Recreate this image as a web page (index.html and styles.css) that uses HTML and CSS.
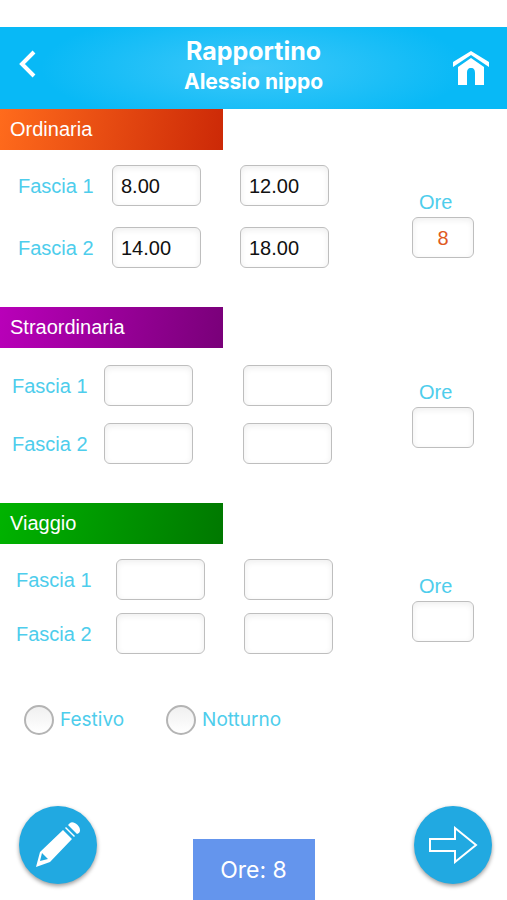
FILE: index.html
```html
<!DOCTYPE html>
<html lang="it">
<head>
<meta charset="utf-8">
<meta name="viewport" content="width=device-width, initial-scale=1">
<title>Rapportino</title>
<link rel="stylesheet" href="styles.css">
</head>
<body>
<header class="bar">
  <button class="bar-btn back" type="button" aria-label="Indietro">
    <svg width="18" height="30" viewBox="0 0 18 30"><path d="M16 3 4 15 16 27" fill="none" stroke="#fff" stroke-width="4"/></svg>
  </button>
  <div class="heading">
    <h1>Rapportino</h1>
    <p>Alessio nippo</p>
  </div>
  <a class="bar-btn home" href="#" aria-label="Home">
    <svg width="36" height="34" viewBox="0 0 36 34" fill="#fff"><path d="M18 0 36 11v5L18 4 0 16v-5z"/><path d="M18 7 31 16v18h-9V22c0-3-1-5-4-5s-4 2-4 5v12H5V16z"/></svg>
  </a>
</header>
<main>
  <section class="ordinary">
    <h2 class="tag">Ordinaria</h2>
    <div class="body">
      <div class="slots">
        <label for="o1">Fascia 1</label>
        <input id="o1" type="text" value="8.00"><input type="text" value="12.00" aria-label="Fascia 1 fine">
        <label for="o2">Fascia 2</label>
        <input id="o2" type="text" value="14.00"><input type="text" value="18.00" aria-label="Fascia 2 fine">
      </div>
      <div class="total">
        <label for="ot">Ore</label>
        <input id="ot" type="text" value="8" readonly>
      </div>
    </div>
  </section>
  <section class="overtime">
    <h2 class="tag">Straordinaria</h2>
    <div class="body">
      <div class="slots">
        <label for="s1">Fascia 1</label>
        <input id="s1" type="text"><input type="text" aria-label="Fascia 1 fine">
        <label for="s2">Fascia 2</label>
        <input id="s2" type="text"><input type="text" aria-label="Fascia 2 fine">
      </div>
      <div class="total">
        <label for="st">Ore</label>
        <input id="st" type="text" readonly>
      </div>
    </div>
  </section>
  <section class="travel">
    <h2 class="tag">Viaggio</h2>
    <div class="body">
      <div class="slots">
        <label for="v1">Fascia 1</label>
        <input id="v1" type="text"><input type="text" aria-label="Fascia 1 fine">
        <label for="v2">Fascia 2</label>
        <input id="v2" type="text"><input type="text" aria-label="Fascia 2 fine">
      </div>
      <div class="total">
        <label for="vt">Ore</label>
        <input id="vt" type="text" readonly>
      </div>
    </div>
  </section>
  <div class="options">
    <label><input type="radio" name="tipo">Festivo</label>
    <label><input type="radio" name="tipo">Notturno</label>
  </div>
</main>
<footer>
  <button class="round edit" type="button" aria-label="Modifica">
    <svg width="46" height="46" viewBox="0 0 46 46" fill="#fff"><path fill-rule="evenodd" d="M1 45 5 30 28 8 37 17 15 40zM5 39 13 37 7 31z"/><path d="m30 6 1-1 9 9-1 1z"/><path d="m33 3 2-2c4-3 13 5 9 10l-2 1z"/></svg>
  </button>
  <output class="sum">Ore: 8</output>
  <button class="round next" type="button" aria-label="Avanti">
    <svg width="50" height="38" viewBox="0 0 50 38"><path d="M2 13H27V2L48 19 27 36V25H2z" fill="none" stroke="#fff" stroke-width="2"/></svg>
  </button>
</footer>
</body>
</html>
```
FILE: styles.css
```css
* { box-sizing: border-box; }
body {
  margin: 0;
  min-height: 100vh;
  display: flex;
  flex-direction: column;
  background: #fff;
  font-family: "Liberation Sans", Arial, sans-serif;
  font-size: 20px;
  line-height: 24px;
}
h1, h2, p { margin: 0; }
button { border: 0; padding: 0; background: none; cursor: pointer; }
svg { display: block; }

.bar {
  margin-top: 27px;
  min-height: 82px;
  padding: 0 18px;
  display: grid;
  grid-template-columns: 1fr auto 1fr;
  align-items: center;
  color: #fff;
  background: radial-gradient(ellipse 42% 75% at 50% 50%, #3ec8f9, #08b9f6);
  font-family: Inter, sans-serif;
}
.bar-btn { justify-self: start; }
.back { margin-bottom: 8px; }
.home { justify-self: end; }
.heading { padding-bottom: 4px; text-align: center; font-weight: 700; }
.heading h1 { font-size: 25px; line-height: 32px; }
.heading p { font-size: 21px; line-height: 30px; }

.tag {
  width: 44%;
  padding: 8px 10px 9px;
  color: #fff;
  font-size: 20px;
  font-weight: 400;
}
.ordinary .tag { background: linear-gradient(100deg, #ff6b1c, #cc2907); }
.overtime .tag { background: linear-gradient(100deg, #b900b9, #790079); }
.travel .tag { background: linear-gradient(100deg, #00b300, #007800); }

.body {
  display: flex;
  justify-content: space-between;
  padding: 15px 33px 39px 0;
}
.overtime .body { padding-top: 17px; }

.slots {
  display: grid;
  align-items: center;
  align-content: start;
}
.slots label, .total label, .options { color: #4ecdec; }
.ordinary .slots {
  grid-template-columns: 94px 128px 89px;
  row-gap: 21px;
  padding-left: 18px;
}
.overtime .slots {
  grid-template-columns: 92px 139px 89px;
  row-gap: 17px;
  padding-left: 12px;
}
.travel .slots {
  grid-template-columns: 100px 128px 89px;
  row-gap: 13px;
  padding-left: 16px;
}

input[type="text"] {
  width: 89px;
  height: 41px;
  padding: 2px 8px 0;
  border: 1px solid #bebebe;
  border-radius: 6px;
  background: #fff;
  box-shadow: inset 0 2px 6px #eee;
  color: #111;
  font: inherit;
}
.total {
  display: flex;
  flex-direction: column;
  gap: 3px;
  padding-top: 15px;
}
.ordinary .total { padding-top: 25px; }
.total label { padding-left: 7px; }
.total input[type="text"] { width: 62px; text-align: center; color: #e05a1e; }

.options {
  display: flex;
  gap: 42px;
  padding: 12px 24px;
  font-family: Inter, sans-serif;
  font-size: 19px;
}
.options label { display: flex; align-items: center; gap: 6px; }
.options input {
  appearance: none;
  width: 30px;
  height: 30px;
  margin: 0;
  border: 2px solid #b4b4b4;
  border-radius: 50%;
  background: linear-gradient(#f0f0f0, #fff);
}
.options input:checked { background: #4ecdec; }

footer {
  margin-top: auto;
  display: grid;
  grid-template-columns: 1fr auto 1fr;
  align-items: end;
}
.round {
  width: 78px;
  height: 78px;
  margin-bottom: 16px;
  border-radius: 50%;
  display: grid;
  place-items: center;
  background: #21a9e1;
  box-shadow: 0 2px 4px #0006;
}
.edit { margin-left: 19px; }
.next { margin-right: 15px; justify-self: end; }
.sum {
  width: 122px;
  padding: 19px 0 18px;
  text-align: center;
  color: #fff;
  background: #6495ed;
  font-family: Inter, sans-serif;
  font-size: 23px;
}
```
